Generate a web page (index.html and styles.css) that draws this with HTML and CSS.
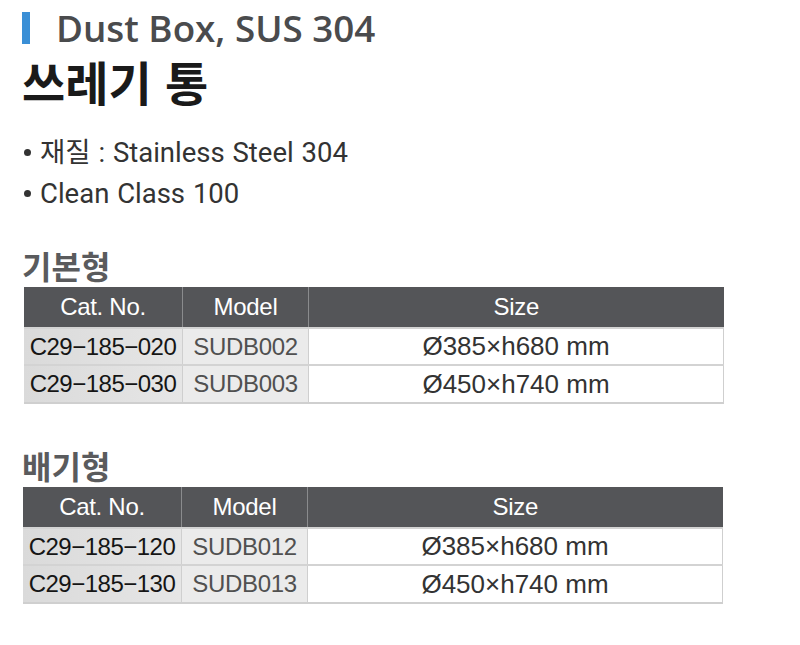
FILE: index.html
```html
<!DOCTYPE html>
<html lang="ko">
<head>
<meta charset="utf-8">
<link rel="stylesheet" href="styles.css">
</head>
<body>
<div class="page">
  <h1 class="title"><span class="bar"></span>Dust Box, SUS 304</h1>
  <h2 class="subtitle">쓰레기 통</h2>
  <ul class="specs">
    <li><span class="dot"></span>재질 : Stainless Steel 304</li>
    <li><span class="dot"></span>Clean Class 100</li>
  </ul>

  <section class="group g1">
    <h3 class="group-title">기본형</h3>
    <table class="spec-table">
      <thead>
        <tr><th class="c1">Cat. No.</th><th class="c2">Model</th><th class="c3">Size</th></tr>
      </thead>
      <tbody>
        <tr><td class="cat">C29−185−020</td><td class="model">SUDB002</td><td class="size">Ø385×h680 mm</td></tr>
        <tr><td class="cat">C29−185−030</td><td class="model">SUDB003</td><td class="size">Ø450×h740 mm</td></tr>
      </tbody>
    </table>
  </section>

  <section class="group g2">
    <h3 class="group-title">배기형</h3>
    <table class="spec-table">
      <thead>
        <tr><th class="c1">Cat. No.</th><th class="c2">Model</th><th class="c3">Size</th></tr>
      </thead>
      <tbody>
        <tr><td class="cat">C29−185−120</td><td class="model">SUDB012</td><td class="size">Ø385×h680 mm</td></tr>
        <tr><td class="cat">C29−185−130</td><td class="model">SUDB013</td><td class="size">Ø450×h740 mm</td></tr>
      </tbody>
    </table>
  </section>
</div>
</body>
</html>
```
FILE: styles.css
```css
html, body {
  margin: 0;
  padding: 0;
  background: #ffffff;
}

.page {
  padding: 8px 0 0 22px;
  font-family: "Noto Sans CJK KR", "Noto Sans", sans-serif;
}

.title {
  display: flex;
  align-items: center;
  margin: 0;
  height: 40px;
  font-family: "Open Sans", "Noto Sans", sans-serif;
  font-weight: 600;
  font-size: 36.8px;
  color: #4a4b4d;
  letter-spacing: 0;
}

.bar {
  display: inline-block;
  width: 8px;
  height: 32px;
  background: #3a8fd6;
  margin-right: 26px;
}

.subtitle {
  margin: 4px 0 0 0;
  font-family: "Noto Sans CJK KR", sans-serif;
  font-weight: 700;
  font-size: 47px;
  line-height: 58px;
  color: #1a1a1a;
}

.specs {
  list-style: none;
  margin: 22px 0 0 0;
  padding: 0;
  font-family: Roboto, "Noto Sans CJK KR", sans-serif;
  font-weight: 400;
  font-size: 27.5px;
  line-height: 41px;
  color: #333333;
  word-spacing: 1px;
}

.dot {
  display: inline-block;
  width: 7px;
  height: 7px;
  border-radius: 50%;
  background: #333333;
  margin: 0 9px 0 2px;
  vertical-align: middle;
  position: relative;
  top: -2px;
}

.group {
  margin-top: 31px;
}

.g1 {
  margin-left: 2px;
}

.g2 {
  margin-top: 41px;
  margin-left: 1px;
}

.group-title {
  margin: 0 0 2px -2px;
  font-family: "Noto Sans CJK KR", sans-serif;
  font-weight: 700;
  font-size: 32px;
  line-height: 40px;
  color: #5a5b5d;
}

.g2 .group-title {
  margin-left: -1px;
}

.spec-table {
  border-collapse: collapse;
  width: 700px;
  font-family: "Liberation Sans", Arial, sans-serif;
}

.spec-table th {
  background: #545558;
  color: #ffffff;
  font-weight: 400;
  font-size: 24px;
  letter-spacing: -0.3px;
  height: 40px;
  padding: 0;
  text-align: center;
  border-left: 1px solid #8a8b8d;
}

.spec-table th:first-child {
  border-left: none;
}

.c1 { width: 158px; }
.c2 { width: 125px; }

.spec-table td {
  height: 35px;
  padding: 0;
  text-align: center;
  border-top: 2px solid #d3d3d3;
  border-left: 1px solid #cfcfcf;
}

.spec-table tbody tr:last-child td {
  height: 36px;
  border-bottom: 2px solid #cfcfcf;
}

.spec-table td:last-child {
  border-right: 1px solid #cfcfcf;
}

.spec-table td.cat {
  border-left: none;
  background: linear-gradient(to right, #dadada, #e6e6e6);
  color: #151515;
  font-size: 24px;
  letter-spacing: -0.5px;
}

.spec-table td.model {
  background: #ebebeb;
  color: #505050;
  font-size: 24px;
  letter-spacing: -0.3px;
}

.spec-table td.size {
  background: #ffffff;
  color: #333333;
  font-size: 26px;
  letter-spacing: 0;
}
```
